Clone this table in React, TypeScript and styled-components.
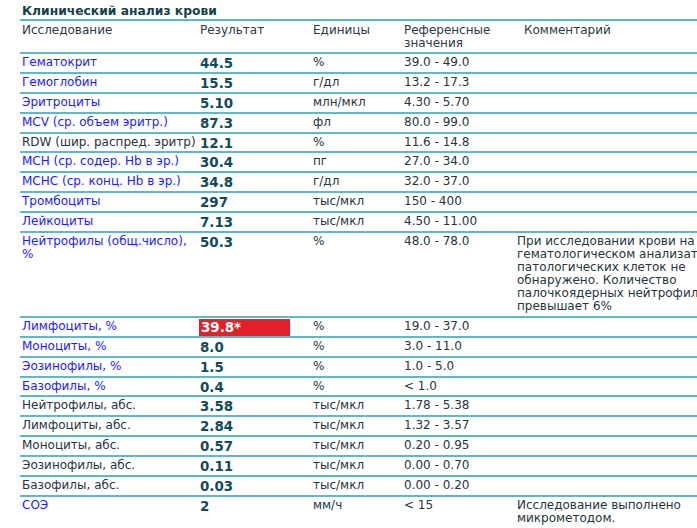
import React from "react";
import styled, { createGlobalStyle } from "styled-components";

const Global = createGlobalStyle`
  html, body { margin: 0; padding: 0; background: #ffffff; overflow: hidden; }
  body { font-family: "DejaVu Sans", Verdana, sans-serif; }
`;

const Page = styled.div`
  padding: 4px 0 0 20px;
  width: 760px;
`;

const Title = styled.div`
  font-weight: bold;
  font-size: 12.3px;
  line-height: 15px;
  color: #173f49;
  padding-left: 2px;
`;

const Table = styled.table`
  border-collapse: collapse;
  table-layout: fixed;
  width: 720px;
  font-size: 12px;
  line-height: 13px;
  color: #24363b;
  border-top: 2px solid #5fb9c6;
`;

const Row = styled.tr`
  border-bottom: 2px solid #5fb9c6;
`;

const HeadCell = styled.th<{ $pad?: number }>`
  text-align: left;
  font-weight: normal;
  vertical-align: top;
  padding: 3px 2px 2px ${(p) => p.$pad ?? 2}px;
  height: 26px;
  color: #2b3a3f;
`;

const Cell = styled.td`
  vertical-align: top;
  padding: 2px 2px 2.9px 2px;
  height: 13px;
`;

const Name = styled(Cell)<{ $link?: boolean }>`
  color: ${(p) => (p.$link ? "#1c1cff" : "#24363b")};
`;

const Value = styled(Cell)`
  font-weight: bold;
  color: #114b5a;
  font-size: 13.4px;
  padding-top: 3px;
  padding-bottom: 1.9px;
`;

const Flag = styled.span`
  display: block;
  width: 89px;
  margin-left: -1px;
  padding-left: 2px;
  background: #e3202a;
  color: #ffffff;
  line-height: 17px;
  margin-top: -2px;
  margin-bottom: -2px;
`;

const Comment = styled(Cell)`
  color: #24363b;
  white-space: nowrap;
  overflow: hidden;
`;

type R = {
  name: string;
  link?: boolean;
  value: string;
  flag?: boolean;
  unit: string;
  ref: string;
  comment?: string[];
};

const rows: R[] = [
  { name: "Гематокрит", link: true, value: "44.5", unit: "%", ref: "39.0 - 49.0" },
  { name: "Гемоглобин", link: true, value: "15.5", unit: "г/дл", ref: "13.2 - 17.3" },
  { name: "Эритроциты", link: true, value: "5.10", unit: "млн/мкл", ref: "4.30 - 5.70" },
  { name: "MCV (ср. объем эритр.)", link: true, value: "87.3", unit: "фл", ref: "80.0 - 99.0" },
  { name: "RDW (шир. распред. эритр)", value: "12.1", unit: "%", ref: "11.6 - 14.8" },
  { name: "MCH (ср. содер. Hb в эр.)", link: true, value: "30.4", unit: "пг", ref: "27.0 - 34.0" },
  { name: "MCHC (ср. конц. Hb в эр.)", link: true, value: "34.8", unit: "г/дл", ref: "32.0 - 37.0" },
  { name: "Тромбоциты", link: true, value: "297", unit: "тыс/мкл", ref: "150 - 400" },
  { name: "Лейкоциты", link: true, value: "7.13", unit: "тыс/мкл", ref: "4.50 - 11.00" },
  {
    name: "Нейтрофилы (общ.число), %",
    link: true,
    value: "50.3",
    unit: "%",
    ref: "48.0 - 78.0",
    comment: [
      "При исследовании крови на",
      "гематологическом анализаторе",
      "патологических клеток не",
      "обнаружено. Количество",
      "палочкоядерных нейтрофилов",
      "превышает 6%",
    ],
  },
  { name: "Лимфоциты, %", link: true, value: "39.8*", flag: true, unit: "%", ref: "19.0 - 37.0" },
  { name: "Моноциты, %", link: true, value: "8.0", unit: "%", ref: "3.0 - 11.0" },
  { name: "Эозинофилы, %", link: true, value: "1.5", unit: "%", ref: "1.0 - 5.0" },
  { name: "Базофилы, %", link: true, value: "0.4", unit: "%", ref: "< 1.0" },
  { name: "Нейтрофилы, абс.", value: "3.58", unit: "тыс/мкл", ref: "1.78 - 5.38" },
  { name: "Лимфоциты, абс.", value: "2.84", unit: "тыс/мкл", ref: "1.32 - 3.57" },
  { name: "Моноциты, абс.", value: "0.57", unit: "тыс/мкл", ref: "0.20 - 0.95" },
  { name: "Эозинофилы, абс.", value: "0.11", unit: "тыс/мкл", ref: "0.00 - 0.70" },
  { name: "Базофилы, абс.", value: "0.03", unit: "тыс/мкл", ref: "0.00 - 0.20" },
  {
    name: "СОЭ",
    link: true,
    value: "2",
    unit: "мм/ч",
    ref: "< 15",
    comment: ["Исследование выполнено", "микрометодом."],
  },
];

export default function App() {
  return (
    <Page>
      <Global />
      <Title>Клинический анализ крови</Title>
      <Table>
        <colgroup>
          <col style={{ width: 178 }} />
          <col style={{ width: 113 }} />
          <col style={{ width: 91 }} />
          <col style={{ width: 113 }} />
          <col style={{ width: 225 }} />
        </colgroup>
        <thead>
          <Row>
            <HeadCell>Исследование</HeadCell>
            <HeadCell>Результат</HeadCell>
            <HeadCell>Единицы</HeadCell>
            <HeadCell>
              Референсные
              <br />
              значения
            </HeadCell>
            <HeadCell $pad={9}>Комментарий</HeadCell>
          </Row>
        </thead>
        <tbody>
          {rows.map((r) => (
            <Row key={r.name}>
              <Name $link={r.link}>{r.name}</Name>
              <Value>{r.flag ? <Flag>{r.value}</Flag> : r.value}</Value>
              <Cell>{r.unit}</Cell>
              <Cell>{r.ref}</Cell>
              <Comment>
                {(r.comment ?? []).map((line, i) => (
                  <React.Fragment key={i}>
                    {i > 0 && <br />}
                    {line}
                  </React.Fragment>
                ))}
              </Comment>
            </Row>
          ))}
        </tbody>
      </Table>
    </Page>
  );
}
